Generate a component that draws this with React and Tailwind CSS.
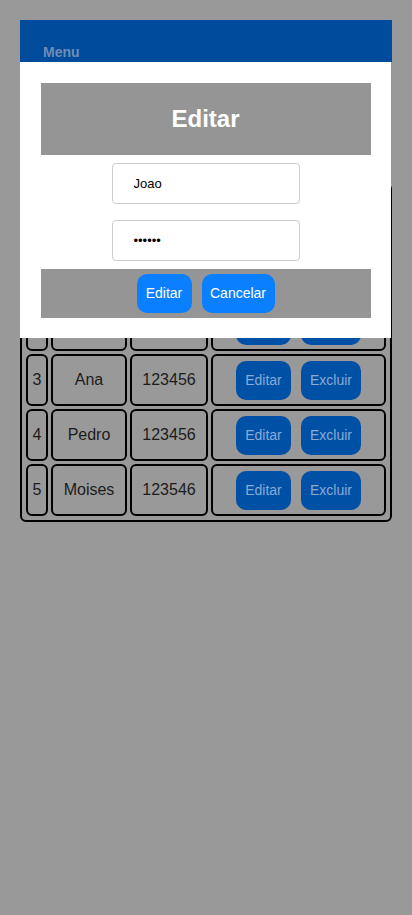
import React from 'react';

const rows = [
  { id: 1, nome: 'Joao', senha: '123456' },
  { id: 2, nome: 'Maria', senha: '123456' },
  { id: 3, nome: 'Ana', senha: '123456' },
  { id: 4, nome: 'Pedro', senha: '123456' },
  { id: 5, nome: 'Moises', senha: '123546' },
];

const cell = 'border-2 border-black rounded-md text-center align-middle';

export default function App() {
  return (
    <div className="relative min-h-screen bg-[#999999] p-[20px] font-['Liberation_Sans',Arial,sans-serif]">
      <div className="h-[42px] bg-[#004b9b] flex items-end pl-[23px] pb-[2px]">
        <span className="text-[14px] leading-[16px] font-bold text-[#6f8cb6]">Menu</span>
      </div>

      <div className="mt-[121px] w-[372px] border-2 border-black rounded-md p-px">
        <table className="border-separate border-spacing-[3px] text-[16px] text-[#1c1c1c]">
          <thead>
            <tr className="h-[52px]">
              <th className={cell + ' w-[22px]'}>ID</th>
              <th className={cell + ' w-[76px]'}>Nome</th>
              <th className={cell + ' w-[78px]'}>Senha</th>
              <th className={cell + ' w-[175px]'}>Ações</th>
            </tr>
          </thead>
          <tbody>
            {rows.map((r) => (
              <tr key={r.id} className="h-[52px]">
                <td className={cell}>{r.id}</td>
                <td className={cell}>{r.nome}</td>
                <td className={cell}>{r.senha}</td>
                <td className={cell}>
                  <div className="flex justify-center gap-[10px]">
                    <button className="w-[55px] h-[39px] rounded-[10px] bg-[#0050a5] text-[14px] text-[#8aaad6]">Editar</button>
                    <button className="w-[60px] h-[39px] rounded-[10px] bg-[#0050a5] text-[14px] text-[#8aaad6]">Excluir</button>
                  </div>
                </td>
              </tr>
            ))}
          </tbody>
        </table>
      </div>

      <div className="absolute left-[20px] top-[62px] w-[371px] h-[276px] bg-white pt-[21px] px-[21px] flex flex-col items-center">
        <div className="w-[330px] h-[72px] bg-[#959595] flex items-center justify-center">
          <h2 className="text-[24px] font-bold text-white">Editar</h2>
        </div>
        <input
          defaultValue="Joao"
          className="mt-[8px] w-[188px] h-[41px] border border-[#cccccc] rounded-[4px] pl-[21px] text-[13px] text-black outline-none"
        />
        <input
          type="password"
          defaultValue="123456"
          className="mt-[16px] w-[188px] h-[41px] border border-[#cccccc] rounded-[4px] pl-[21px] text-[13px] text-black outline-none"
        />
        <div className="mt-[8px] w-[330px] h-[49px] bg-[#959595] flex justify-center items-start pt-[5px] gap-[10px]">
          <button className="w-[55px] h-[39px] rounded-[10px] bg-[#0a7fff] text-[14px] text-white">Editar</button>
          <button className="w-[73px] h-[39px] rounded-[10px] bg-[#0a7fff] text-[14px] text-white">Cancelar</button>
        </div>
      </div>
    </div>
  );
}
